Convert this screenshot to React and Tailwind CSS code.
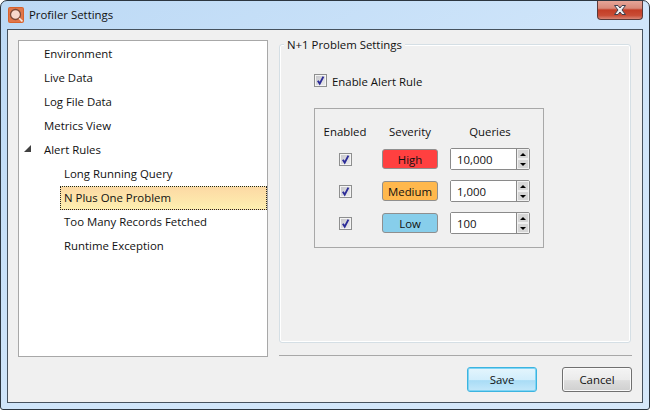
const tree = [
  { t: "Environment" },
  { t: "Live Data" },
  { t: "Log File Data" },
  { t: "Metrics View" },
  { t: "Alert Rules", arrow: true },
  { t: "Long Running Query", sub: true },
  { t: "N Plus One Problem", sub: true, sel: true },
  { t: "Too Many Records Fetched", sub: true },
  { t: "Runtime Exception", sub: true },
];

function Check() {
  return (
    <span className="block w-[13px] h-[13px] border border-[#8e8f8f] bg-gradient-to-br from-[#c4c4c8] to-[#eeeef0] shrink-0 relative">
      <svg viewBox="0 0 13 13" className="absolute -left-px -top-px w-[13px] h-[13px]">
        <rect x="1.5" y="1.5" width="10" height="10" fill="none" stroke="#f4f4f4" />
        <path d="M3.8 6.8 L5.7 9.6 L9.4 2.6" fill="none" stroke="#2c2c98" strokeWidth="1.9" />
      </svg>
    </span>
  );
}

function Spin({ v }) {
  return (
    <div className="w-20 h-[22px] border border-[#8a8a8a] rounded-[2px] bg-white flex items-stretch">
      <div className="w-[65px] bg-white pl-[6px] leading-[21px]">{v}</div>
      <div className="flex-1 bg-[#f0f0f0] border-l border-[#8a8a8a] pl-px pr-px pt-px flex flex-col gap-[2px]">
        <div className="h-[8px] bg-[#d6d6d6] flex items-center justify-center">
          <span className="w-0 h-0 border-x-[3px] border-x-transparent border-b-[3px] border-b-black" />
        </div>
        <div className="h-[8px] bg-[#d6d6d6] flex items-center justify-center">
          <span className="w-0 h-0 border-x-[3px] border-x-transparent border-t-[3px] border-t-black" />
        </div>
      </div>
    </div>
  );
}

function Row({ label, color, v }) {
  return (
    <div className="flex items-center h-[22px]">
      <div className="w-[60px] flex justify-center">
        <Check />
      </div>
      <div className="w-[70px] flex justify-center">
        <div className={`w-14 h-5 rounded-[3px] border border-[#8f8f8f] flex items-center justify-center pt-px ${color}`}>
          {label}
        </div>
      </div>
      <div className="ml-[5px]">
        <Spin v={v} />
      </div>
    </div>
  );
}

export default function App() {
  return (
    <div
      className="w-[650px] h-[410px] relative flex flex-col border border-[#2c3640] rounded-t-[7px] rounded-b-[3px] overflow-hidden bg-gradient-to-br from-[#bcd9f5] via-[#cfe5fa] to-[#d6e8fa] text-[11.4px] text-[#111]"
      style={{ fontFamily: '"Open Sans", "Noto Sans", sans-serif' }}
    >
      <div className="h-[28px] shrink-0 flex items-center pl-[7px] gap-[5px] pb-px">
        <svg viewBox="0 0 16 16" className="w-4 h-4 shrink-0">
          <rect x="0" y="0" width="16" height="16" rx="2" fill="#d8622c" />
          <rect x="1" y="1" width="14" height="14" rx="1" fill="#e0764a" />
          <circle cx="7.5" cy="7.5" r="5" fill="#f8d8cc" stroke="#7c4a38" strokeWidth="1.3" />
          <path d="M11.2 11.2 L14.4 14.4" stroke="#f4ece4" strokeWidth="1.6" />
        </svg>
        <span>Profiler Settings</span>
      </div>

      <div className="absolute right-[6px] top-0 w-[46px] h-[19px] rounded-b-[4px] border border-t-0 border-[#5a3a3a] bg-[linear-gradient(#e6a598_0%,#d98a7a_40%,#c33d26_50%,#c94c35_80%,#d98575_100%)] flex items-center justify-center">
        <svg viewBox="0 0 16 12" className="w-4 h-3">
          <path d="M2.5 1.5 H6 L8 4 L10 1.5 H13.5 L10 6 L13.5 10.5 H10 L8 8 L6 10.5 H2.5 L6 6 Z" fill="#eef0f4" stroke="#3d3f4d" strokeWidth="1" />
        </svg>
      </div>

      <div className="mx-[6px] mb-[6px] flex-1 border border-[#46525e] bg-[#f0f0f0] p-[10px] flex gap-[11px] min-h-0">
        <div className="w-[250px] h-[317px] shrink-0 border border-[#a8a8a8] bg-white pt-px">
          {tree.map((r) => (
            <div key={r.t} className="h-6 flex items-center relative">
              {r.arrow && (
                <span className="absolute left-[5px] top-[7px] w-0 h-0 border-l-[7px] border-l-transparent border-b-[7px] border-b-[#404040]" />
              )}
              {r.sel ? (
                <div className="ml-[41px] w-[207px] h-6 border border-dotted border-[#222] bg-gradient-to-b from-[#fcd9a4] to-[#fdefb0] flex items-center pl-[3px]">
                  {r.t}
                </div>
              ) : (
                <span className={r.sub ? "ml-[45px]" : "ml-[25px]"}>{r.t}</span>
              )}
            </div>
          ))}
        </div>

        <div className="flex-1 flex flex-col min-w-0">
          <div className="relative mt-[4px] w-[352px] h-[299px] border border-[#d5dfe5] rounded-[3px] shadow-[inset_0_0_0_1px_#ffffff]">
            <div className="absolute left-[4px] -top-[8px] px-[3px] bg-[#f0f0f0] leading-[16px]">N+1 Problem Settings</div>
            <div className="flex items-center mt-[29px] ml-[34px] gap-[5px] h-[13px]">
              <Check />
              <span className="relative top-px">Enable Alert Rule</span>
            </div>
            <div className="ml-[34px] mt-[21px] w-[230px] h-[140px] border border-[#a8a8a8] pt-[15px]">
              <div className="flex h-4 items-center mb-[8px]">
                <div className="w-[60px] text-center">Enabled</div>
                <div className="w-[70px] text-center">Severity</div>
                <div className="ml-[5px] w-20 text-center">Queries</div>
              </div>
              <div className="flex flex-col gap-[10px]">
                <Row label="High" color="bg-[#ff4040]" v="10,000" />
                <Row label="Medium" color="bg-[#ffb84d]" v="1,000" />
                <Row label="Low" color="bg-[#87ceeb]" v="100" />
              </div>
            </div>
          </div>
          <div className="h-px w-[353px] bg-[#a8a8a8] mt-[12px]" />
          <div className="flex justify-end gap-[25px] mt-[11px]">
            <button className="w-[70px] h-[25px] rounded-[3px] border border-[#3cb4e0] bg-[linear-gradient(#e4f5fd_0%,#d2eefc_50%,#a9dcf6_55%,#c4e8fa_100%)] shadow-[inset_0_0_0_1px_#7fd4f4]">
              Save
            </button>
            <button className="w-[70px] h-[25px] rounded-[3px] border border-[#707070] bg-[linear-gradient(#f4f4f4_0%,#ebebeb_50%,#dddddd_55%,#cfcfcf_100%)] shadow-[inset_0_0_0_1px_#fafafa]">
              Cancel
            </button>
          </div>
        </div>
      </div>
    </div>
  );
}
